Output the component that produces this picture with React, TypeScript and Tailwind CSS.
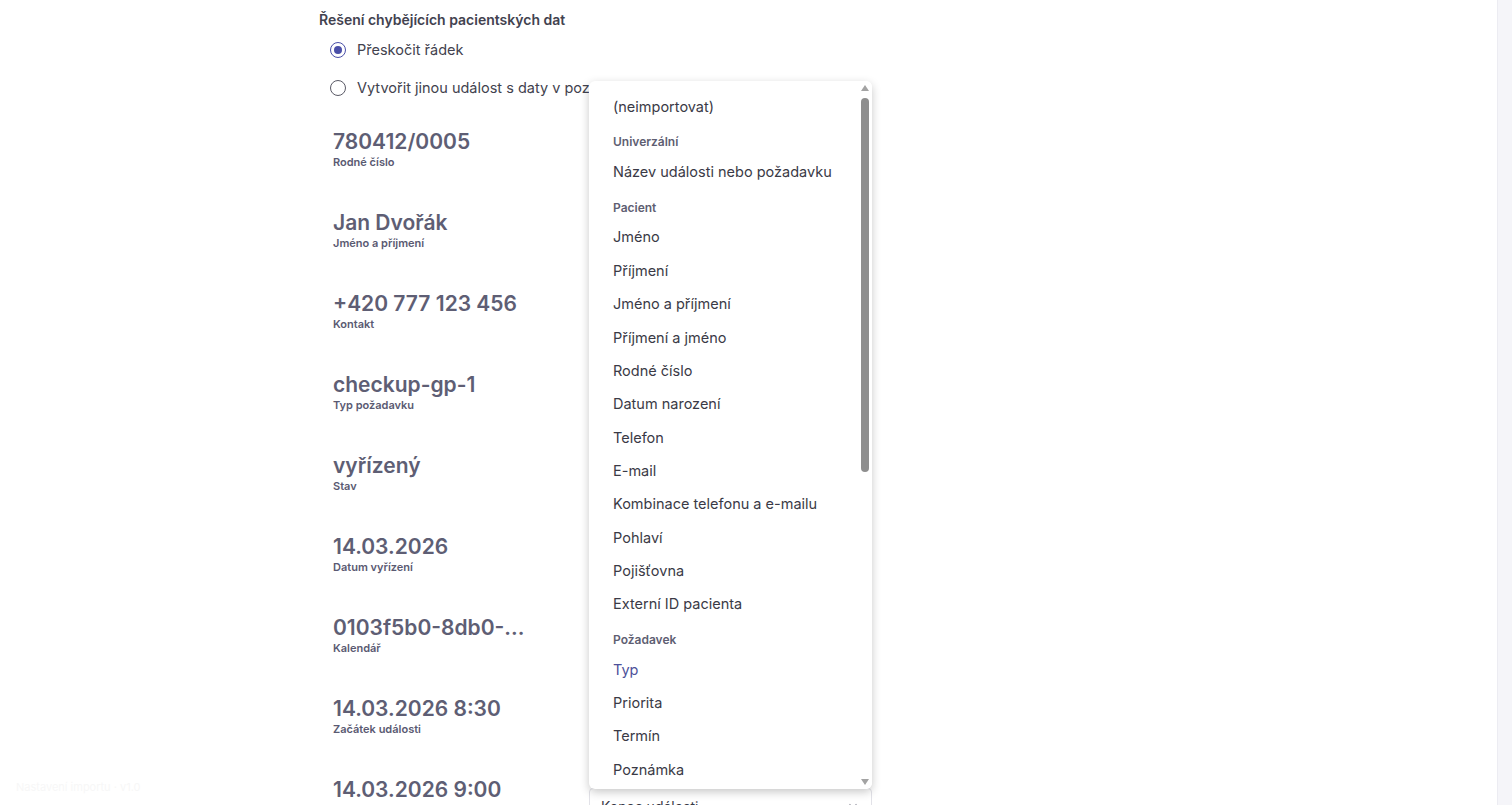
import React from "react"

const rows = [
  { value: "780412/0005", label: "Rodné číslo", field: "Rodné číslo" },
  { value: "Jan Dvořák", label: "Jméno a příjmení", field: "Jméno a příjmení" },
  { value: "+420 777 123 456", label: "Kontakt", field: "Kombinace telefonu a e-mailu" },
  { value: "checkup-gp-1", label: "Typ požadavku", field: "Typ" },
  { value: "vyřízený", label: "Stav", field: "Stav" },
  { value: "14.03.2026", label: "Datum vyřízení", field: "Datum vyřízení" },
  { value: "0103f5b0-8db0-...", label: "Kalendář", field: "Kalendář" },
  { value: "14.03.2026 8:30", label: "Začátek události", field: "Začátek události" },
  { value: "14.03.2026 9:00", label: "Konec události", field: "Konec události" },
]

type Opt = { text: string; header?: boolean; active?: boolean }

const options: Opt[] = [
  { text: "(neimportovat)" },
  { text: "Univerzální", header: true },
  { text: "Název události nebo požadavku" },
  { text: "Pacient", header: true },
  { text: "Jméno" },
  { text: "Příjmení" },
  { text: "Jméno a příjmení" },
  { text: "Příjmení a jméno" },
  { text: "Rodné číslo" },
  { text: "Datum narození" },
  { text: "Telefon" },
  { text: "E-mail" },
  { text: "Kombinace telefonu a e-mailu" },
  { text: "Pohlaví" },
  { text: "Pojišťovna" },
  { text: "Externí ID pacienta" },
  { text: "Požadavek", header: true },
  { text: "Typ", active: true },
  { text: "Priorita" },
  { text: "Termín" },
  { text: "Poznámka" },
  { text: "Stav" },
  { text: "Datum vyřízení" },
]

function Radio({ checked, label }: { checked?: boolean; label: string }) {
  return (
    <label className="flex items-center h-[38px] pl-[11px] gap-[11px] whitespace-nowrap">
      <span className={`w-[16px] h-[16px] rounded-full border-[1.5px] flex items-center justify-center ${checked ? "border-[#4a4fa8]" : "border-[#5a5a66]"}`}>
        {checked && <span className="w-[8px] h-[8px] rounded-full bg-[#4a4fa8]" />}
      </span>
      <span className="text-[14.5px] text-[#42424e]">{label}</span>
    </label>
  )
}

function Dropdown() {
  return (
    <div className="absolute left-[589px] top-[81px] w-[283px] h-[708px] bg-white rounded-[6px] shadow-[0_3px_10px_rgba(0,0,0,0.22)] overflow-hidden">
      <div className="pt-[9px] pr-[20px]">
        {options.map((o, i) =>
          o.header ? (
            <div key={i} className="h-[32px] pt-[12px] pl-[24px] text-[12px] leading-[14px] font-semibold text-[#5e5e72]">{o.text}</div>
          ) : (
            <div key={i} className={`h-[33.35px] flex items-center pl-[24px] text-[14.5px] whitespace-nowrap ${o.active ? "text-[#4d519a]" : "text-[#3a3a46]"}`}>{o.text}</div>
          )
        )}
      </div>
      {/* scrollbar */}
      <div className="absolute right-0 top-0 bottom-0 w-[14px] bg-white">
        <svg className="absolute left-[3px] top-[4px]" width="8" height="6" viewBox="0 0 8 6"><path d="M4 0L8 6H0Z" fill="#a3a3a3" /></svg>
        <div className="absolute left-[3px] top-[17px] w-[8px] h-[374px] rounded-full bg-[#8e8e8e]" />
        <svg className="absolute left-[3px] bottom-[4px]" width="8" height="6" viewBox="0 0 8 6"><path d="M0 0H8L4 6Z" fill="#a3a3a3" /></svg>
      </div>
    </div>
  )
}

export default function App() {
  return (
    <div className="h-[805px] w-full flex overflow-hidden bg-white" style={{ fontFamily: "Inter, 'Noto Sans', sans-serif" }}>
      <div className="flex-1 relative">
        <div className="pl-[319px] pt-[10px]">
          <h3 className="text-[14px] leading-[20px] font-semibold text-[#42424f]">Řešení chybějících pacientských dat</h3>
          <div className="mt-[1px]">
            <Radio checked label="Přeskočit řádek" />
            <Radio label="Vytvořit jinou událost s daty v pozadí a označit ji k doplnění" />
          </div>
          <div className="mt-[22px] pl-[14px]">
            {rows.map((r) => (
              <div key={r.label} className="h-[81px] flex">
                <div className="w-[256px]">
                  <div className="text-[21px] leading-[26px] font-semibold text-[#5e5e74] whitespace-nowrap">{r.value}</div>
                  <div className="text-[11px] leading-[14px] font-semibold text-[#5a5a72]">{r.label}</div>
                </div>
                <div className="mt-[11px] w-[283px] h-[36px] border border-[#e2e2e8] rounded-[4px] flex items-center justify-between px-[11px] text-[14px] text-[#3a3a46]">
                  <span>{r.field}</span>
                  <svg width="14" height="14" viewBox="0 0 24 24" fill="none" stroke="#9a9aa6" strokeWidth="2"><path d="M6 9l6 6 6-6" /></svg>
                </div>
              </div>
            ))}
          </div>
        </div>
        <div className="absolute left-[16px] bottom-[10px] text-[11px] text-[#f7f7f7]">Nastavení importu · v1.0</div>
        <Dropdown />
      </div>
      <div className="w-[15px] h-full bg-[#f5f5f9] border-l border-[#ececf2]" />
    </div>
  )
}
